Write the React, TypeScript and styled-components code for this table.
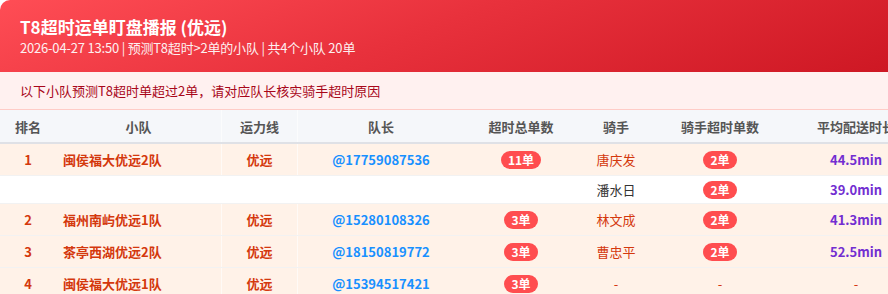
import React from "react";
import styled, { createGlobalStyle } from "styled-components";

const GlobalStyle = createGlobalStyle`
	html, body {
		margin: 0;
		padding: 0;
		overflow: hidden;
		background: #ffffff;
	}
	body {
		font-family: "Noto Sans CJK SC", "Noto Sans", sans-serif;
		color: #333;
	}
`;

const COLS = "56px 166px 76px 166px 114px 76px 132px 140px";

const Card = styled.div`
	width: 926px;
	border-radius: 10px 10px 0 0;
	overflow: hidden;
	background: #fff;
`;

const Header = styled.div`
	background: linear-gradient(160deg, #ff4d55 0%, #e8313c 45%, #cc1622 100%);
	padding: 15px 20px 16px;
	color: #fff;
`;

const Title = styled.div`
	font-size: 17px;
	line-height: 24px;
	font-weight: 700;
`;

const Subtitle = styled.div`
	margin-top: 1px;
	font-size: 13px;
	line-height: 16px;
	letter-spacing: -0.2px;
	opacity: 0.92;
`;

const Alert = styled.div`
	background: #fff1f0;
	border-bottom: 1px solid #ffccc7;
	padding: 10px 20px;
	font-size: 13px;
	line-height: 17px;
	color: #a8071a;
`;

const Row = styled.div<{ $tone: "head" | "hot" | "plain"; $h: number }>`
	display: grid;
	grid-template-columns: ${COLS};
	box-sizing: border-box;
	height: ${(p) => p.$h}px;
	background: ${(p) => (p.$tone === "head" ? "#f5f7fa" : p.$tone === "hot" ? "#fff2e8" : "#ffffff")};
	border-bottom: ${(p) => (p.$tone === "head" ? "2px solid #dfe1e6" : "1px solid #f2f2f2")};
`;

const Cell = styled.div<{ $left?: boolean; $head?: boolean }>`
	display: flex;
	align-items: center;
	justify-content: ${(p) => (p.$left ? "flex-start" : "center")};
	padding: ${(p) => (p.$left ? "0 7px" : "0")};
	font-size: 13px;
	font-weight: ${(p) => (p.$head ? 700 : 400)};
	color: ${(p) => (p.$head ? "#555" : "#333")};
	white-space: nowrap;
	&:nth-child(2), &:nth-child(3) {
		border-right: 1px solid rgba(255, 255, 255, 0.6);
	}
`;

const Hot = styled.span<{ $bold?: boolean }>`
	color: #d4380d;
	font-weight: ${(p) => (p.$bold ? 700 : 400)};
`;

const Leader = styled.span`
	color: #1890ff;
	font-weight: 700;
`;

const Minutes = styled.span`
	color: #722ed1;
	font-weight: 700;
`;

const Badge = styled.span`
	display: inline-block;
	background: #ff4d4f;
	color: #fff;
	font-size: 12px;
	font-weight: 700;
	line-height: 18px;
	padding: 0 7px;
	border-radius: 9px;
`;

type Rider = { name: string; count: number; avg: string };
type Team = { rank: number; team: string; line: string; leader: string; total: number; riders: Rider[] };

const teams: Team[] = [
	{
		rank: 1,
		team: "闽侯福大优远2队",
		line: "优远",
		leader: "@17759087536",
		total: 11,
		riders: [
			{ name: "唐庆发", count: 2, avg: "44.5min" },
			{ name: "潘水日", count: 2, avg: "39.0min" },
		],
	},
	{ rank: 2, team: "福州南屿优远1队", line: "优远", leader: "@15280108326", total: 3, riders: [{ name: "林文成", count: 2, avg: "41.3min" }] },
	{ rank: 3, team: "茶亭西湖优远2队", line: "优远", leader: "@18150819772", total: 3, riders: [{ name: "曹忠平", count: 2, avg: "52.5min" }] },
	{ rank: 4, team: "闽侯福大优远1队", line: "优远", leader: "@15394517421", total: 3, riders: [] },
];

const heads = ["排名", "小队", "运力线", "队长", "超时总单数", "骑手", "骑手超时单数", "平均配送时长"];

const App = () => {
	return (
		<>
			<GlobalStyle />
			<Card>
				<Header>
					<Title>T8超时运单盯盘播报 (优远)</Title>
					<Subtitle>2026-04-27 13:50 | 预测T8超时&gt;2单的小队 | 共4个小队 20单</Subtitle>
				</Header>
				<Alert>以下小队预测T8超时单超过2单，请对应队长核实骑手超时原因</Alert>
				<Row $tone="head" $h={34}>
					{heads.map((h) => (
						<Cell key={h} $head>
							{h}
						</Cell>
					))}
				</Row>
				{teams.map((t) => {
					const first = t.riders[0];
					return (
						<React.Fragment key={t.rank}>
							<Row $tone="hot" $h={32}>
								<Cell><Hot $bold>{t.rank}</Hot></Cell>
								<Cell $left><Hot $bold>{t.team}</Hot></Cell>
								<Cell><Hot $bold>{t.line}</Hot></Cell>
								<Cell><Leader>{t.leader}</Leader></Cell>
								<Cell><Badge>{t.total}单</Badge></Cell>
								<Cell><Hot>{first ? first.name : "-"}</Hot></Cell>
								<Cell>{first ? <Badge>{first.count}单</Badge> : <Hot>-</Hot>}</Cell>
								<Cell>{first ? <Minutes>{first.avg}</Minutes> : <Hot>-</Hot>}</Cell>
							</Row>
							{t.riders.slice(1).map((r) => (
								<Row key={r.name} $tone="plain" $h={28}>
									<Cell />
									<Cell $left />
									<Cell />
									<Cell />
									<Cell />
									<Cell>{r.name}</Cell>
									<Cell><Badge>{r.count}单</Badge></Cell>
									<Cell><Minutes>{r.avg}</Minutes></Cell>
								</Row>
							))}
						</React.Fragment>
					);
				})}
			</Card>
		</>
	);
};

export default App;
